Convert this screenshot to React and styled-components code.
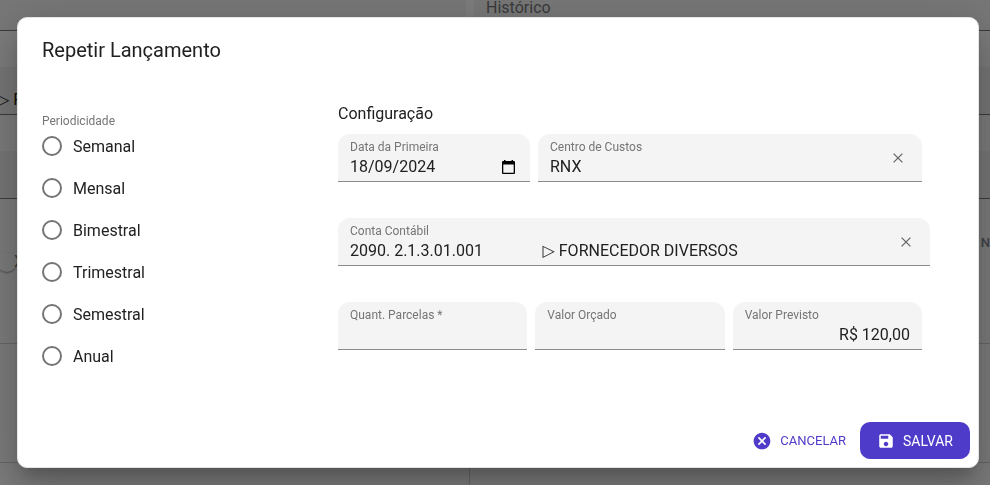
import React, { useState } from 'react'
import styled, { createGlobalStyle } from 'styled-components'

const COLOR = {
  PRIMARY: '#4f3bc9',
  TEXT: '#212121',
  LABEL: '#757575',
  FIELD: '#f4f4f4',
  LINE: '#8c8c8c',
}

const PERIODS = [
  'Semanal',
  'Mensal',
  'Bimestral',
  'Trimestral',
  'Semestral',
  'Anual',
]

const ACCOUNT = `2090. 2.1.3.01.001${' '.repeat(14)} ▷ FORNECEDOR DIVERSOS`

function Field({ id, label, value, align, children }) {
  const [text, setText] = useState(value || '')
  return (
    <FieldBox>
      <FieldMain>
        <FieldLabel htmlFor={id}>{label}</FieldLabel>
        <FieldInput
          id={id}
          $align={align}
          value={text}
          onChange={(e) => setText(e.target.value)}
        />
      </FieldMain>
      {children}
    </FieldBox>
  )
}

function ClearButton() {
  return (
    <ClearBtn type="button" aria-label="Limpar">
      <svg width="10" height="10" viewBox="0 0 10 10">
        <path d="M.6.6l8.8 8.8M9.4.6L.6 9.4" stroke="#666" strokeWidth="1.3" />
      </svg>
    </ClearBtn>
  )
}

function CalendarButton() {
  return (
    <CalendarBtn type="button" aria-label="Abrir calendário">
      <svg width="13" height="14" viewBox="0 0 13 14">
        <path
          fillRule="evenodd"
          d="M2 0h1.500v1h6V0H11v1h1q1 0 1 1v11q0 1-1 1H1q-1 0-1-1V2q0-1 1-1h1zM1.300 4.500v8.200h10.400V4.500z"
        />
      </svg>
    </CalendarBtn>
  )
}

function LaunchPage() {
  return (
    <Page aria-hidden="true">
      <PageRow $height={31}>
        <PageCell $flex={10} />
        <PageCell $flex={11}>
          <PageLabel>Histórico</PageLabel>
        </PageCell>
      </PageRow>
      <PageRow $height={48}>
        <PageCell $flex={1}>
          <PageValue>▷ FORNECEDOR DIVERSOS</PageValue>
        </PageCell>
      </PageRow>
      <PageRow $height={48}>
        <PageCell $flex={1} />
      </PageRow>
      <PageOptions>
        <Toggle>
          <Knob />X
        </Toggle>
        <OptionText>N</OptionText>
      </PageOptions>
      <PageTable>
        <PageColumn $flex={10}>
          <PageCaption />
        </PageColumn>
        <PageColumn $flex={11}>
          <PageCaption />
        </PageColumn>
      </PageTable>
    </Page>
  )
}

function App() {
  const [period, setPeriod] = useState('')
  return (
    <>
      <GlobalStyle />
      <LaunchPage />
      <Backdrop>
        <Dialog role="dialog" aria-labelledby="dialog-title">
          <Title id="dialog-title">Repetir Lançamento</Title>
          <Content>
            <Periods>
              <Legend>Periodicidade</Legend>
              {PERIODS.map((name) => (
                <RadioLabel key={name}>
                  <Radio
                    type="radio"
                    name="period"
                    checked={period === name}
                    onChange={() => setPeriod(name)}
                  />
                  {name}
                </RadioLabel>
              ))}
            </Periods>
            <div>
              <Subtitle>Configuração</Subtitle>
              <FieldRow $columns="1fr 2fr" $inset>
                <Field id="first" label="Data da Primeira" value="18/09/2024">
                  <CalendarButton />
                </Field>
                <Field id="center" label="Centro de Custos" value="RNX">
                  <ClearButton />
                </Field>
              </FieldRow>
              <FieldRow $columns="1fr">
                <Field id="account" label="Conta Contábil" value={ACCOUNT}>
                  <ClearButton />
                </Field>
              </FieldRow>
              <FieldRow $columns="1fr 1fr 1fr" $inset>
                <Field id="count" label="Quant. Parcelas *" />
                <Field id="budget" label="Valor Orçado" align="right" />
                <Field
                  id="expected"
                  label="Valor Previsto"
                  value="R$ 120,00"
                  align="right"
                />
              </FieldRow>
            </div>
          </Content>
          <Actions>
            <CancelButton type="button">
              <svg width="20" height="20" viewBox="0 0 24 24" fill="currentColor">
                <path d="M12 2C6.470 2 2 6.470 2 12s4.470 10 10 10 10-4.470 10-10S17.530 2 12 2zm5 13.590L15.590 17 12 13.410 8.410 17 7 15.590 10.590 12 7 8.410 8.410 7 12 10.590 15.590 7 17 8.410 13.410 12 17 15.590z" />
              </svg>
              CANCELAR
            </CancelButton>
            <SaveButton type="button">
              <svg width="18" height="18" viewBox="0 0 24 24" fill="currentColor">
                <path d="M17 3H5c-1.110 0-2 .9-2 2v14c0 1.100.89 2 2 2h14c1.100 0 2-.9 2-2V7l-4-4zm-5 16c-1.660 0-3-1.340-3-3s1.340-3 3-3 3 1.340 3 3-1.340 3-3 3zm3-10H5V5h10v4z" />
              </svg>
              SALVAR
            </SaveButton>
          </Actions>
        </Dialog>
      </Backdrop>
    </>
  )
}

const GlobalStyle = createGlobalStyle`
  * {
    box-sizing: border-box;
  }

  body {
    margin: 0;
    background: #fff;
    color: ${COLOR.TEXT};
    font-family: Roboto, 'DejaVu Sans', sans-serif;
    font-size: 16px;
  }

  button, input {
    font: inherit;
    color: inherit;
  }

  svg {
    display: block;
    flex: none;
  }
`

const Page = styled.div`
  min-height: 100vh;
  margin-left: -3px;
  display: flex;
  flex-direction: column;
  gap: 36px;
  background: #f8f8f8;
`

const PageRow = styled.div`
  height: ${({ $height }) => $height}px;
  display: flex;
  gap: 8px;
`

const PageCell = styled.div`
  flex: ${({ $flex }) => $flex} 0 0;
  background: #eee;
  border-bottom: 1px solid #777;
  line-height: 16px;
  white-space: nowrap;
`

const PageLabel = styled.div`
  padding: 0 12px;
  color: ${COLOR.LABEL};
`

const PageValue = styled.div`
  padding-top: 25px;
`

const PageOptions = styled.div`
  height: 72px;
  display: flex;
  justify-content: space-between;
  line-height: 16px;
`

const Toggle = styled.div`
  padding-top: 17px;
  display: flex;
  align-items: center;
  align-self: flex-start;
  color: ${COLOR.LABEL};
`

const Knob = styled.div`
  width: 20px;
  height: 20px;
  margin-right: -3px;
  border-radius: 50%;
  background: #f8f8f8;
  box-shadow: 0 1px 2px #999;
`

const OptionText = styled.span`
  color: #7b8494;
  font-size: 13px;
  font-weight: 500;
`

const PageTable = styled.div`
  flex: 1;
  display: flex;
  border-top: 1px solid #ccc;
`

const PageColumn = styled.div`
  flex: ${({ $flex }) => $flex} 0 0;

  & + & {
    border-left: 1px solid #ccc;
  }
`

const PageCaption = styled.div`
  height: 119px;
  border-bottom: 1px solid #ccc;
`

const Backdrop = styled.div`
  position: fixed;
  inset: 0;
  padding: 0 11px 0 17px;
  display: flex;
  align-items: center;
  background: rgba(0, 0, 0, 0.5);
`

const Dialog = styled.div`
  width: 100%;
  background: #fff;
  border: 1px solid #e4e4e4;
  border-radius: 10px;
  box-shadow:
    0 11px 15px -7px rgba(0, 0, 0, 0.2),
    0 24px 38px 3px rgba(0, 0, 0, 0.14),
    0 9px 46px 8px rgba(0, 0, 0, 0.12);
`

const Title = styled.h2`
  margin: 0;
  padding: 16px 24px;
  font-size: 20px;
  font-weight: 400;
  line-height: 32px;
`

const Content = styled.div`
  padding: 20px 48px 0 24px;
  display: grid;
  grid-template-columns: 288px 1fr;
  gap: 8px;
`

const Periods = styled.fieldset`
  margin: 0;
  padding: 12px 0 0;
  border: 0;
`

const Legend = styled.legend`
  float: left;
  width: 100%;
  margin-bottom: 6px;
  padding: 0;
  color: ${COLOR.LABEL};
  font-size: 12px;
  line-height: 14px;
`

const RadioLabel = styled.label`
  clear: both;
  height: 24px;
  margin-bottom: 18px;
  display: flex;
  align-items: center;
  gap: 11px;
  cursor: pointer;
`

const Radio = styled.input`
  appearance: none;
  width: 20px;
  height: 20px;
  margin: 0;
  border: 2px solid ${COLOR.LABEL};
  border-radius: 50%;

  &:checked {
    border: 6px solid ${COLOR.PRIMARY};
  }
`

const Subtitle = styled.h3`
  margin: 0 0 8px;
  font-size: 16px;
  font-weight: 400;
  line-height: 24px;
`

const FieldRow = styled.div`
  margin-bottom: 36px;
  padding-right: ${({ $inset }) => ($inset ? 8 : 0)}px;
  display: grid;
  grid-template-columns: ${({ $columns }) => $columns};
  gap: 8px;
`

const FieldBox = styled.div`
  height: 48px;
  min-width: 0;
  padding: 0 12px;
  display: flex;
  background: ${COLOR.FIELD};
  border-bottom: 1px solid ${COLOR.LINE};
  border-radius: 12px 12px 0 0;
`

const FieldMain = styled.div`
  flex: 1;
  min-width: 0;
  padding-top: 5px;
`

const FieldLabel = styled.label`
  display: block;
  color: ${COLOR.LABEL};
  font-size: 12px;
  line-height: 16px;
`

const FieldInput = styled.input`
  display: block;
  width: 100%;
  height: 22px;
  padding: 0;
  border: 0;
  outline: 0;
  background: transparent;
  text-align: ${({ $align }) => $align || 'left'};
`

const IconBtn = styled.button`
  padding: 0;
  display: flex;
  justify-content: center;
  align-items: center;
  background: none;
  border: 0;
  cursor: pointer;
`

const ClearBtn = styled(IconBtn)`
  width: 24px;
`

const CalendarBtn = styled(IconBtn)`
  width: 20px;
  padding-top: 18px;
`

const Actions = styled.div`
  padding: 36px 8px 8px;
  display: flex;
  justify-content: flex-end;
  gap: 8px;
`

const Button = styled.button`
  height: 37px;
  display: flex;
  justify-content: center;
  align-items: center;
  gap: 8px;
  border: 0;
  border-radius: 10px;
  cursor: pointer;
`

const CancelButton = styled(Button)`
  padding: 0 6px;
  background: none;
  color: ${COLOR.PRIMARY};
  font-size: 13px;
`

const SaveButton = styled(Button)`
  min-width: 110px;
  padding: 0 16px;
  background: ${COLOR.PRIMARY};
  color: #fff;
  font-size: 14px;
`

export default App
